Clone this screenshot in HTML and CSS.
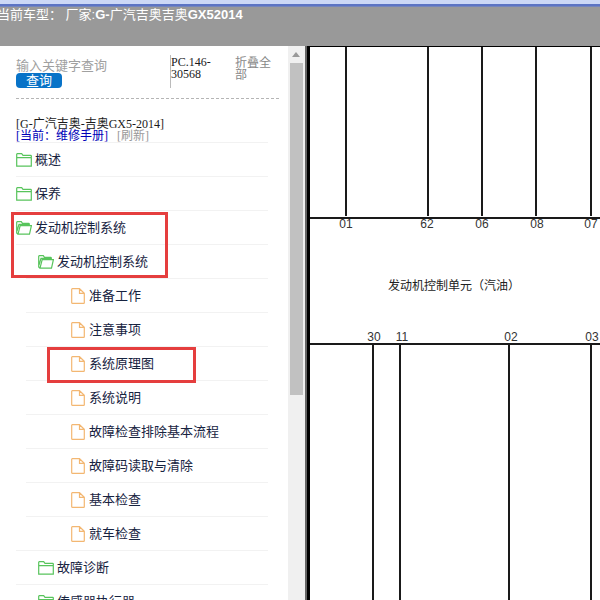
FILE: index.html
```html
<!DOCTYPE html>
<html lang="zh-CN">
<head>
<meta charset="utf-8">
<title>维修手册</title>
<link rel="stylesheet" href="styles.css">
</head>
<body>
<svg class="symbols" aria-hidden="true">
  <symbol id="folder" viewBox="0 0 16 14"><path d="M.7 13.2V1.3Q.7.7 1.3.7H5.7L7 2.3H14.7Q15.3 2.3 15.3 3V13.2ZM.7 4.6H15.3"/></symbol>
  <symbol id="folder-open" viewBox="0 0 16 14"><path d="M2 13.2L.7 12V1.3Q.7.7 1.3.7H5.3L6.5 2.3H12.6Q13.3 2.3 13.3 3V4.7M2 13.2L4.2 4.7H15.4L13.5 13.2ZM1 10L3 3.3H13"/></symbol>
  <symbol id="file" viewBox="0 0 14 16"><path d="M.7 1.3Q.7.7 1.3.7H8.5L13.3 5.3V14.7Q13.3 15.3 12.7 15.3H1.3Q.7 15.3.7 14.7ZM8.5.7V5.3H13.3"/></symbol>
</svg>
<header class="topbar">
  <div class="vehicle">当前车型： 厂家:<b>G-</b>广汽吉奥吉奥<b>GX52014</b></div>
</header>
<main class="workspace">
  <aside class="sidebar">
    <form class="search">
      <div class="search-main">
        <input class="keyword" type="text" placeholder="输入关键字查询" aria-label="输入关键字查询">
        <button class="query" type="button">查询</button>
      </div>
      <div class="code">PC.146-30568</div>
      <a class="collapse" href="#">折叠全部</a>
    </form>
    <div class="manual">
      <div>[G-广汽吉奥-吉奥GX5-2014]</div>
      <div><a class="current" href="#">[当前：维修手册]</a><a class="refresh" href="#">[刷新]</a></div>
    </div>
    <ul class="tree">
      <li><a class="row" href="#"><svg class="folder"><use href="#folder"/></svg>概述</a></li>
      <li><a class="row" href="#"><svg class="folder"><use href="#folder"/></svg>保养</a></li>
      <li class="marked-group"><a class="row" href="#"><svg class="folder"><use href="#folder-open"/></svg>发动机控制系统</a>
        <ul class="systems">
          <li><a class="row" href="#"><svg class="folder"><use href="#folder-open"/></svg>发动机控制系统</a>
            <ul class="pages">
              <li><a class="row" href="#"><svg class="file"><use href="#file"/></svg>准备工作</a></li>
              <li><a class="row" href="#"><svg class="file"><use href="#file"/></svg>注意事项</a></li>
              <li class="marked-page"><a class="row" href="#"><svg class="file"><use href="#file"/></svg>系统原理图</a></li>
              <li><a class="row" href="#"><svg class="file"><use href="#file"/></svg>系统说明</a></li>
              <li><a class="row" href="#"><svg class="file"><use href="#file"/></svg>故障检查排除基本流程</a></li>
              <li><a class="row" href="#"><svg class="file"><use href="#file"/></svg>故障码读取与清除</a></li>
              <li><a class="row" href="#"><svg class="file"><use href="#file"/></svg>基本检查</a></li>
              <li><a class="row" href="#"><svg class="file"><use href="#file"/></svg>就车检查</a></li>
            </ul>
          </li>
          <li><a class="row" href="#"><svg class="folder"><use href="#folder"/></svg>故障诊断</a></li>
          <li><a class="row" href="#"><svg class="folder"><use href="#folder"/></svg>传感器执行器</a></li>
        </ul>
      </li>
    </ul>
  </aside>
  <div class="scrollbar" aria-hidden="true">
    <svg class="arrow" viewBox="0 0 17 17"><path d="M4 11L8 6L12 11Z"/></svg>
    <div class="thumb"></div>
  </div>
  <section class="diagram">
    <svg class="schematic" viewBox="0 0 290 553" preserveAspectRatio="xMinYMin slice" role="img" aria-label="发动机控制单元（汽油）">
      <g class="wires">
        <path d="M36 0V169M118 0V169M172 0V169M226 0V169M281 0V169"/>
        <path d="M0 171H290M0 297H290"/>
        <path d="M63 297V553M90 297V553M199 297V553M281 297V553"/>
      </g>
      <g class="pins">
        <text x="36" y="181">01</text><text x="117" y="181">62</text><text x="172" y="181">06</text><text x="227" y="181">08</text><text x="281" y="181">07</text>
        <text x="64" y="294">30</text><text x="92" y="294">11</text><text x="201" y="294">02</text><text x="282" y="294">03</text>
      </g>
      <text class="unit" x="78" y="243">发动机控制单元（汽油）</text>
    </svg>
  </section>
</main>
</body>
</html>
```

FILE: styles.css
```css
*, *::before { box-sizing: border-box; }

body {
  display: flex;
  flex-direction: column;
  height: 100vh;
  margin: 0;
  overflow: hidden;
  background: #fff;
  color: #1a1a1a;
  font: 12px/12px "Liberation Serif", "Noto Sans CJK SC", serif;
}

a { color: inherit; text-decoration: none; }
ul { margin: 0; padding: 0; list-style: none; }
.symbols { position: absolute; width: 0; height: 0; }

.topbar {
  flex: none;
  height: 46px;
  background: linear-gradient(#ccd8f6 0 4px, #5c74c4 4px 6px, #7585bb 6px 7px, #999 7px);
  overflow: hidden;
}
.vehicle {
  margin-left: -3px;
  padding-top: 7px;
  color: #fff;
  font: 13px/16px "Liberation Sans", "Noto Sans CJK SC", sans-serif;
  white-space: nowrap;
}

.workspace { display: flex; flex: 1; min-height: 0; }

.sidebar {
  flex: none;
  width: 48%;
  padding: 9px 9px 0 16px;
  overflow: hidden;
}

.search {
  display: flex;
  height: 44px;
  border-bottom: 1px dashed #b5b5b5;
}
.search-main { flex: none; width: 154px; padding-top: 2px; }
.keyword {
  display: block;
  width: 100%;
  height: 16px;
  padding: 0;
  border: 0;
  outline: 0;
  background: none;
  font: 13px/16px "Noto Sans CJK SC", sans-serif;
}
.keyword::placeholder { color: #a0a0a0; opacity: 1; }
.query {
  display: block;
  width: 46px;
  height: 15px;
  padding: 0 0 2px;
  border: 0;
  border-radius: 4px;
  background: #0873c8;
  color: #fff;
  font: 13px/13px "Noto Sans CJK SC", sans-serif;
}
.code {
  flex: none;
  width: 65px;
  height: 33px;
  padding: 1px 20px 0 0;
  border-left: 1px solid #bbb;
}
.collapse { width: 36px; padding-top: 2px; color: #888; }

.manual { padding: 19px 0 0; white-space: nowrap; }
.current { color: #0000b8; }
.refresh { margin-left: 9px; color: #999; }

.tree {
  margin-right: 11px;
  color: #17233f;
  font: 13px/31px "Noto Sans CJK SC", sans-serif;
}
.tree li { border-top: 1px solid #f2f2f2; }
.row {
  display: flex;
  align-items: flex-start;
  gap: 3px;
  height: 33px;
  white-space: nowrap;
}
.row svg { flex: none; align-self: center; fill: none; stroke-width: 1.2; }
.folder { width: 16px; height: 14px; stroke: #58c45c; }
.file { width: 14px; height: 16px; stroke: #f3b772; }
.systems .row { padding-left: 22px; }
.pages { margin-left: 10px; }
.pages .row { gap: 4px; padding-left: 45px; }

.marked-group, .marked-page { position: relative; }
.marked-group::before, .marked-page::before {
  content: "";
  position: absolute;
  border: 3px solid #e53e3e;
  pointer-events: none;
}
.marked-group::before { top: 1px; left: -5px; width: 157px; height: 66px; }
.marked-page::before { top: 0; left: 21px; width: 149px; height: 36px; }

.scrollbar { flex: none; width: 17px; background: #f0f0f0; }
.arrow { display: block; width: 17px; height: 17px; fill: #999; }
.thumb { width: 13px; height: 60%; margin-left: 2px; background: #c1c1c1; }

.diagram {
  flex: 1;
  min-width: 0;
  border-top: 1px solid #000;
  border-left: 3px solid #000;
  box-shadow: -2px 0 #666;
  margin-left: 2px;
}
.schematic { display: block; width: 100%; height: 100%; }
.wires { fill: none; stroke: #1a1a1a; stroke-width: 2; }
.pins { fill: #333; font: 12px "Liberation Sans", sans-serif; text-anchor: middle; }
.unit { fill: #222; font: 12px "Noto Sans CJK SC", sans-serif; }
```
